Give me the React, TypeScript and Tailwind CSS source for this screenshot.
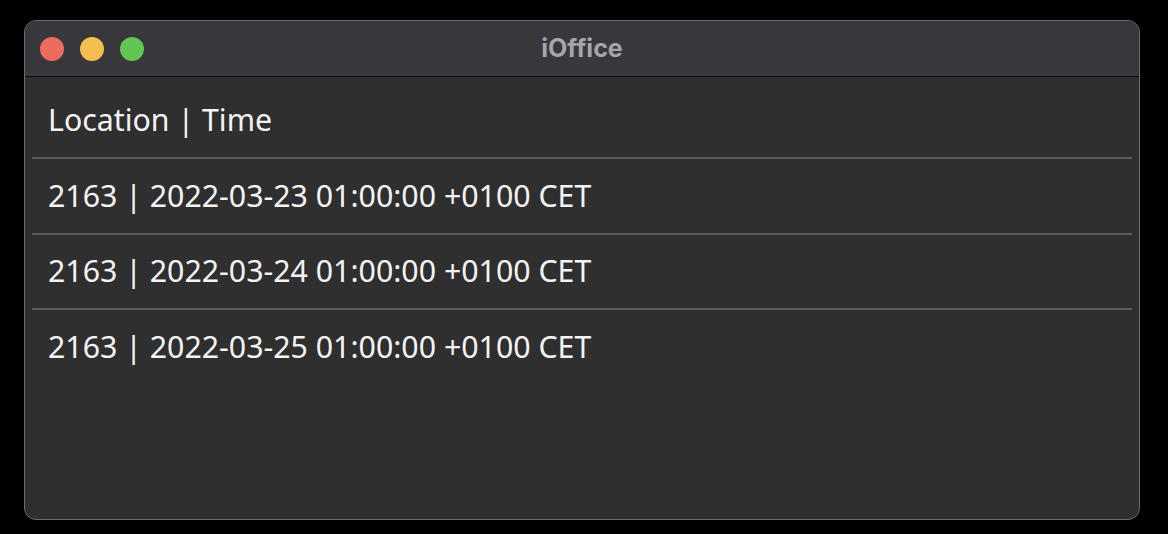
export default function App() {
  const rows = [
    { t: "2163 | 2022-03-23 01:00:00 +0100 CET", c: "h-[76px] flex items-center pl-[16px] border-b-2 border-[#5c5c5c]" },
    { t: "2163 | 2022-03-24 01:00:00 +0100 CET", c: "h-[75px] flex items-center pl-[16px] border-b-2 border-[#5c5c5c]" },
    { t: "2163 | 2022-03-25 01:00:00 +0100 CET", c: "h-[74px] flex items-center pl-[16px]" },
  ];
  return (
    <div className="w-[1168px] h-[534px] bg-black pl-[24px] pt-[20px]">
      <div className="w-[1116px] h-[500px] rounded-[12px] border border-[#6b6b6d] bg-[#2f2f2f] overflow-hidden flex flex-col">
        <div className="relative h-[56px] bg-[#38373c] border-b border-[#0c0c0c] flex items-center shrink-0">
          <div className="flex items-center gap-[16px] pl-[15px] pt-[1px]">
            <div className="w-[24px] h-[24px] rounded-full bg-[#ed6a5e]" />
            <div className="w-[24px] h-[24px] rounded-full bg-[#f5bf4f]" />
            <div className="w-[24px] h-[24px] rounded-full bg-[#61c554]" />
          </div>
          <div
            className="absolute inset-0 flex items-center justify-center text-[25px] font-bold text-[#a6a5aa]"
            style={{ fontFamily: '"Inter", "Liberation Sans", sans-serif' }}
          >
            iOffice
          </div>
        </div>
        <div
          className="px-[7px] text-[30.3px] text-[#f4f4f4] leading-none"
          style={{ fontFamily: '"Noto Sans", "Open Sans", sans-serif' }}
        >
          <div className="h-[82px] pt-[7px] flex items-center pl-[16px] border-b-2 border-[#5c5c5c]">
            Location | Time
          </div>
          {rows.map((r, i) => (
            <div key={i} className={r.c}>
              {r.t}
            </div>
          ))}
        </div>
      </div>
    </div>
  );
}
